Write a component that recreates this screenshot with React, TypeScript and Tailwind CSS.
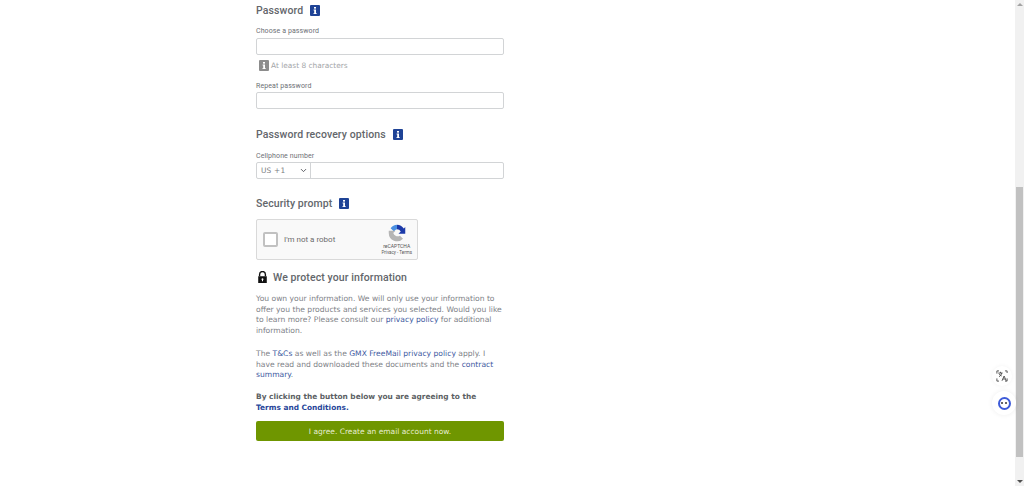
import { ChevronDown } from "lucide-react"

function InfoBadge({ gray = false }: { gray?: boolean }) {
  return (
    <span
      className={`inline-flex h-[11px] w-[10px] shrink-0 items-center justify-center rounded-[1px] text-white ${
        gray ? "bg-[#8c8c8c]" : "bg-[#1f4396]"
      }`}
    >
      <svg viewBox="0 0 10 11" className="h-full w-full" fill="currentColor">
        <rect x="4" y="2" width="2" height="1.6" />
        <path d="M3.6 4.6H6V8.2H6.8V9H3.4V8.2H4.2V5.4H3.6Z" />
      </svg>
    </span>
  )
}

function SectionTitle({ title }: { title: string }) {
  return (
    <div className="flex h-[20px] items-center gap-[7px]">
      <h2 className="pt-[2px] font-['Roboto',sans-serif] text-[10.5px] font-medium tracking-[0.1px] text-[#63666b]">
        {title}
      </h2>
      <InfoBadge />
    </div>
  )
}

function FieldLabel({ text }: { text: string }) {
  return (
    <label className="block font-['Roboto',sans-serif] text-[7px] leading-[12px] tracking-[0.1px] text-[#6d7075]">
      {text}
    </label>
  )
}

function TextLink({ children }: { children: string }) {
  return <a className="text-[#3e5a9f]">{children}</a>
}

export default function App() {
  return (
    <div className="relative flex h-[486px] w-[1024px] overflow-hidden bg-white font-['DejaVu_Sans',sans-serif]">
      <main className="flex-1 pl-[256px]">
        <div className="w-[248px]">
          <SectionTitle title="Password" />

          <div className="mt-[5px]">
            <FieldLabel text="Choose a password" />
          </div>
          <input className="mt-[1px] block h-[17px] w-full rounded-[2px] border border-[#d2d4d6] bg-white" />
          <div className="mt-[5px] flex h-[12px] items-start gap-[2px] pl-[3px]">
            <InfoBadge gray />
            <span className="text-[7.4px] leading-[12px] text-[#a3a5a8]">At least 8 characters</span>
          </div>
          <div className="mt-[8px]">
            <FieldLabel text="Repeat password" />
          </div>
          <input className="block h-[17px] w-full rounded-[2px] border border-[#d2d4d6] bg-white" />

          <div className="mt-[15px]">
            <SectionTitle title="Password recovery options" />
          </div>
          <div className="mt-[6px]">
            <FieldLabel text="Cellphone number" />
          </div>
          <div className="flex h-[17px] w-full rounded-[2px] border border-[#d2d4d6]">
            <div className="flex w-[54px] items-center justify-between border-r border-[#d2d4d6] pl-[4px] pr-[2px] text-[7.4px] tracking-[0.2px] text-[#7a7c81]">
              <span>US +1</span>
              <ChevronDown className="h-[9px] w-[9px] text-[#55585e]" strokeWidth={2.5} />
            </div>
          </div>

          <div className="mt-[14px]">
            <SectionTitle title="Security prompt" />
          </div>

          <div className="mt-[6px] flex h-[41px] w-[162px] items-center rounded-[2px] border border-[#d9d9d9] bg-[#f9f9f9] pl-[6px] pr-[5px] font-['Roboto',sans-serif]">
            <span className="h-[15px] w-[15px] rounded-[2px] border-2 border-[#c1c1c1] bg-white" />
            <span className="ml-[6px] text-[8px] text-[#6b6b6b]">I'm not a robot</span>
            <div className="ml-auto flex flex-col items-center">
              <svg viewBox="0 0 24 24" className="h-[18px] w-[18px]" fill="none">
                <path d="M12 1a11 11 0 0 1 9 5l2-2v9h-9l3-3a6 6 0 0 0-5-3Z" fill="#1c3aa9" />
                <path d="M12 1A11 11 0 0 0 3.500 5.500L8 10a5 5 0 0 1 4-3Z" fill="#4a90e2" />
                <path d="M1 12a11 11 0 0 0 19 7.500L16 15.500A6 6 0 0 1 7 12l3-3H1Z" fill="#b5b5b5" />
              </svg>
              <span className="mt-[1px] text-[5px] leading-[7px] text-[#555555]">reCAPTCHA</span>
              <span className="text-[4.5px] leading-[6px] text-[#555555]">Privacy - Terms</span>
            </div>
          </div>

          <div className="mt-[7px] flex h-[20px] items-center gap-[5px]">
            <svg viewBox="0 0 12 14" className="ml-[1px] h-[12px] w-[11px]" fill="#111111">
              <path d="M3.4 6V4a2.6 2.6 0 0 1 5.2 0v2h1.6V4a4.2 4.2 0 0 0-8.4 0v2Z" />
              <path d="M1 6h10v8H1ZM6 8.4a1.2 1.2 0 0 0-.6 2.2V12h1.2v-1.4A1.2 1.2 0 0 0 6 8.4Z" fillRule="evenodd" />
            </svg>
            <h2 className="pt-[2px] font-['Roboto',sans-serif] text-[10.5px] font-medium tracking-[0.1px] text-[#63666b]">
              We protect your information
            </h2>
          </div>

          <p className="mt-[7px] text-[7.6px] leading-[10.7px] text-[#808287]">
            You own your information. We will only use your information to offer you the products and services you
            selected. Would you like to learn more? Please consult our <TextLink>privacy policy</TextLink> for
            additional information.
          </p>

          <p className="mt-[12px] text-[7.6px] leading-[10.7px] text-[#808287]">
            The <TextLink>T&Cs</TextLink> as well as the <TextLink>GMX FreeMail privacy policy</TextLink> apply. I have
            read and downloaded these documents and the <TextLink>contract summary</TextLink>.
          </p>

          <p className="mt-[11px] text-[7.4px] font-bold leading-[10.7px] text-[#5c5f64]">
            By clicking the button below you are agreeing to the
            <br />
            <a className="text-[#27469a]">Terms and Conditions.</a>
          </p>

          <button className="mt-[8px] block h-[20px] w-full rounded-[2px] bg-[#6f9600] text-center text-[7.5px] text-[#e6edd0]">
            I agree. Create an email account now.
          </button>
        </div>
      </main>

      {/* Scrollbar */}
      <div className="flex h-full w-[9px] flex-col items-center bg-[#f1f1f1]">
        <div className="mt-[3px] h-0 w-0 border-x-[3px] border-b-[3px] border-x-transparent border-b-[#a3a3a3]" />
        <div className="mt-[181px] h-[270px] w-[7px] bg-[#c1c1c1]" />
        <div className="mt-[23px] h-0 w-0 border-x-[3px] border-t-[3px] border-x-transparent border-t-[#505050]" />
      </div>

      {/* Floating extension buttons */}
      <div className="absolute right-[12px] top-[366px] flex h-[20px] w-[20px] items-center justify-center rounded-full bg-white shadow-[0_0_4px_rgba(0,0,0,0.05)]">
        <svg viewBox="0 0 20 20" className="h-[12px] w-[12px]" fill="none" stroke="#4a4a4a" strokeWidth="1.5">
          <path d="M1.500 6V1.500H5M18.500 14v4.500H15M1.500 14v4.500H5M15 1.500h3.500V5" />
          <path d="M4 5h7M7.500 3v2M5 11c2.500-1 4-3 4.500-6M5 6c1 2 2.500 3.500 4.500 4" />
          <path d="M10 18l3.500-8 3.500 8M11.500 15h4" />
        </svg>
      </div>
      <div className="absolute right-[8px] top-[391px] flex h-[24px] w-[24px] items-center justify-center rounded-full bg-white shadow-[0_0_5px_rgba(0,0,0,0.07)]">
        <span className="relative flex h-[13px] w-[13px] items-center justify-center gap-[2px] rounded-full border-2 border-[#3d5bd9]">
          <span className="h-[2px] w-[2px] rounded-full bg-[#333333]" />
          <span className="h-[2px] w-[2px] rounded-full bg-[#333333]" />
        </span>
      </div>
    </div>
  )
}
